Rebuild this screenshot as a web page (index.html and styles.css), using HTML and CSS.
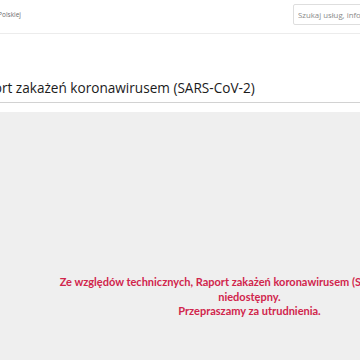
FILE: index.html
```html
<!DOCTYPE html>
<html lang="pl">
<head>
  <meta charset="UTF-8">
  <title>Raport zakażeń koronawirusem (SARS-CoV-2)</title>
  <link rel="stylesheet" href="styles.css">
</head>
<body>

<div class="page">
  <!-- Nagłówek -->
  <header class="header">
    <div class="brand">Serwis Rzeczypospolitej Polskiej</div>
    <input class="search" type="text" placeholder="Szukaj usług, informacji" />
  </header>

  <!-- Tytuł -->
  <div class="title-bar">
    <h1>Raport zakażeń koronawirusem (SARS-CoV-2)</h1>
  </div>

  <!-- Raport -->
  <div class="report">
    <p class="notice">
      Ze względów technicznych, Raport zakażeń koronawirusem (SARS-CoV-2) jest<br>
      niedostępny.<br>
      Przepraszamy za utrudnienia.
    </p>
  </div>
</div>

</body>
</html>
```

FILE: styles.css
```css
html, body {
  margin: 0;
  padding: 0;
  overflow: hidden;
  background: #fff;
}
body {
  font-family: "Open Sans", Arial, sans-serif;
  height: 360px;
}
.page {
  margin-left: -40px;
  width: 579px;
}
.header {
  display: flex;
  align-items: flex-start;
  height: 33px;
  border-bottom: 1px solid #ececec;
}
.brand {
  width: 61px;
  display: flex;
  justify-content: flex-end;
  white-space: nowrap;
  font-size: 6.5px;
  color: #6b6b6b;
  padding-top: 10px;
}
.search {
  margin-left: 272px;
  margin-top: 4px;
  width: 180px;
  height: 21px;
  box-sizing: border-box;
  border: 1px solid #dedede;
  border-radius: 2px;
  padding: 0 4px;
  font-family: "Open Sans", Arial, sans-serif;
  font-size: 7.8px;
}
.search::placeholder { color: #8a8a8a; }
.title-bar {
  padding: 0 0 0 9.5px;
  height: 68px;
  border-bottom: 1px solid #d2d2d2;
  margin-bottom: 9px;
}
h1 {
  margin: 0;
  padding-top: 45px;
  font-size: 13.6px;
  font-weight: 400;
  color: #1b1b1b;
  line-height: 18px;
  white-space: nowrap;
}
.report {
  background: #efefef;
  height: 260px;
  padding-top: 163px;
  box-sizing: border-box;
}
.notice {
  margin: 0;
  text-align: center;
  font-family: Lato, "Open Sans", sans-serif;
  font-weight: 700;
  font-size: 11px;
  line-height: 14.5px;
  color: #d1254c;
  white-space: nowrap;
}
```
